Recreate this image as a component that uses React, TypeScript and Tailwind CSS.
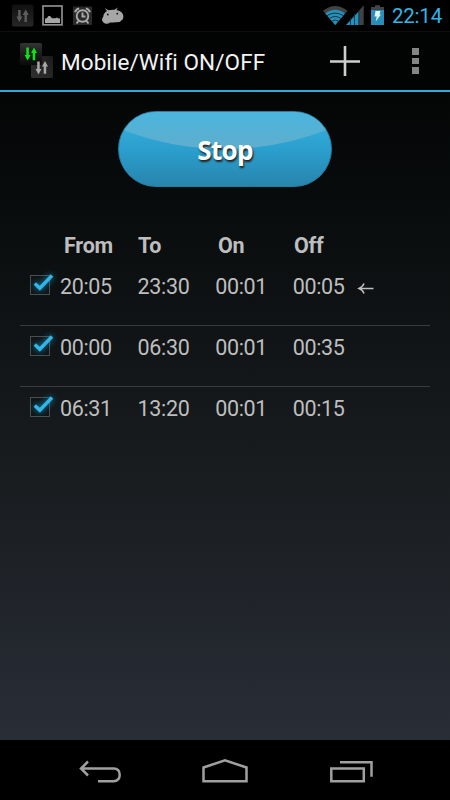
const schedules = [
  { from: "20:05", to: "23:30", on: "00:01", off: "00:05", active: true },
  { from: "00:00", to: "06:30", on: "00:01", off: "00:35", active: false },
  { from: "06:31", to: "13:20", on: "00:01", off: "00:15", active: false },
];

function StatusIcons() {
  return (
    <svg width="450" height="31" viewBox="0 0 450 31" className="block">
      <defs>
        <linearGradient id="tile" x1="0" y1="0" x2="0" y2="1">
          <stop offset="0" stopColor="#101010" />
          <stop offset="1" stopColor="#272727" />
        </linearGradient>
      </defs>
      <rect x="12" y="4.500" width="21.500" height="22" rx="2" fill="url(#tile)" />
      <g fill="#5e5e5e">
        <path d="M18.200 10h2.400v6.500h1.800l-3 5.500-3-5.500h1.800z" />
        <path d="M25.700 9.500l3 5.500h-1.800v7h-2.400v-7h-1.800z" />
      </g>
      <rect x="43" y="6" width="19" height="18.800" fill="none" stroke="#8e8e8e" strokeWidth="1.700" />
      <path d="M45 23v-4.500h1.500l2-2.500h1.500l2 2.200h3.500l1.500-.7 1.500 1h1.500v4.500z" fill="#a6a6a6" />
      <rect x="73" y="6.500" width="19" height="18.500" fill="#292929" />
      <g fill="none" stroke="#a9a9a9" strokeWidth="1.900">
        <circle cx="82.500" cy="16" r="5.800" />
        <path d="M82.500 12.500v4h3M75 12.200q1-3 4.200-3.800M90 12.200q-1-3-4.200-3.800M78.500 21l-2 2.500M86.500 21l2 2.500" />
      </g>
      <path
        d="M107 11l-2.300-3 3.800 2.300q3-.8 6-.5l3.300-2.300-1.300 2.500q3.500.5 5.300 2.500 2.700 3.500.8 7-2.500 3.300-7 2.800-3.200.3-5.600.2-1.700 1.500-4 1.200-3.500-.8-4-4 .3-2 1.300-3.200.2-3.500 3.700-5.500z"
        fill="#a6a6a6"
      />
      <circle cx="107.800" cy="14.500" r=".9" fill="#111" />
      <circle cx="117.300" cy="13.700" r=".9" fill="#111" />
      <path d="M335.200 25L323 10.800Q335.200 1 347.500 10.800z" fill="#424242" />
      <path d="M335.200 25L325.300 13.500Q335.200 6 345 13.500z" fill="#2690b9" />
      <g fill="none" stroke="#07202b" strokeWidth=".8">
        <path d="M327 15.700Q335.200 10.500 343.500 15.700" />
        <path d="M329.300 18.500Q335.200 14.500 341.200 18.500" />
        <path d="M331.500 21.300Q335.200 18.700 338.900 21.300" />
      </g>
      <path d="M346 25l13.500-14.500V25z" fill="#2690b9" />
      <path d="M359.500 10l4.200-4.800V25h-4.200z" fill="#424242" />
      <path d="M350.500 18v7M354.500 14v11M358.700 10v15" stroke="#0b3445" strokeWidth=".8" />
      <path d="M371 9.800V7h4V5.200h5V7h4v2.800z" fill="#444" />
      <path d="M371 9.800h13V25h-13z" fill="#288fb8" />
      <path d="M375.500 11h5l-1 3.500h1.500l-5.300 7 1-5h-2.200z" fill="#e3f3fb" />
    </svg>
  );
}

function AppLogo() {
  return (
    <svg width="34" height="37" viewBox="0 0 34 37" className="ml-[19px] shrink-0 -translate-y-px">
      <defs>
        <linearGradient id="logoTile" x1="0" y1="0" x2="0" y2="1">
          <stop offset="0" stopColor="#343434" />
          <stop offset=".5" stopColor="#1c1c1c" />
          <stop offset="1" stopColor="#0b0b0b" />
        </linearGradient>
        <linearGradient id="logoTileDim" x1="1" y1="0" x2="0" y2="1">
          <stop offset="0" stopColor="#1c1c1c" />
          <stop offset="1" stopColor="#303030" />
        </linearGradient>
      </defs>
      <rect x="12" y="14" width="22" height="22" rx="1.500" fill="url(#logoTileDim)" />
      <rect x="1" y="1" width="22" height="22" rx="2" fill="url(#logoTile)" />
      <g fill="#08e713">
        <path d="M7.300 5.500h2.500V13h1.800l-3 5.500-3-5.500h1.700z" />
        <path d="M15 5.500l3 5.500h-1.800v7.300h-2.500V11H12z" />
      </g>
      <g fill="#a8a8a8">
        <path d="M18.200 19.500h2.500V27h1.800l-3 5.500-3-5.500h1.700z" />
        <path d="M26 19l3 5.500h-1.800v7.300h-2.500v-7.300H23z" />
      </g>
    </svg>
  );
}

function StatusBar() {
  return (
    <div className="relative h-[31px] bg-black">
      <StatusIcons />
      <span className="absolute right-[8px] top-[2px] text-[20.500px] leading-7 tracking-[-0.200px] text-[#33b5e5]">22:14</span>
    </div>
  );
}

function ActionBar() {
  return (
    <header className="flex h-[61px] items-center border-b-2 border-t border-b-[#2fabd9] border-t-[#101010] bg-[#020404]">
      <AppLogo />
      <h1 className="ml-2 w-[267px] translate-y-px whitespace-nowrap text-[22.500px] leading-7 tracking-[0.080px] text-[#f3f3f3]">Mobile/Wifi ON/OFF</h1>
      <svg width="32" height="32" viewBox="0 0 32 32" className="ml-[1px] shrink-0">
        <path d="M16 1v30M1 16.500h30" stroke="#cecece" strokeWidth="2.600" />
      </svg>
      <div className="ml-[51px] flex flex-col gap-[3px]">
        <span className="h-[6.500px] w-[6.500px] bg-[#858585]" />
        <span className="h-[6.500px] w-[6.500px] bg-[#858585]" />
        <span className="h-[6.500px] w-[6.500px] bg-[#858585]" />
      </div>
    </header>
  );
}

function StopButton() {
  return (
    <button className="relative mx-auto block h-[76px] w-[214px] overflow-hidden rounded-full border border-[#287da1] bg-linear-to-b from-[#36b2df] via-[#2b9fce] to-[#2785ad]">
      <svg width="214" height="76" viewBox="0 0 214 76" className="absolute -left-px -top-px">
        <defs>
          <linearGradient id="gloss" x1="0" y1="0" x2="0" y2="1">
            <stop offset="0" stopColor="#4ab5df" />
            <stop offset="1" stopColor="#60adcc" />
          </linearGradient>
        </defs>
        <path d="M0 17Q107 59 214 17V1H0z" fill="url(#gloss)" />
      </svg>
      <span className="relative top-px font-['Open_Sans'] text-[26px] font-bold leading-8 tracking-[-0.700px] text-white [text-shadow:1px_2px_2px_#222]">Stop</span>
    </button>
  );
}

function Checkbox() {
  return (
    <svg width="40" height="32" viewBox="0 0 40 32" className="shrink-0 overflow-visible">
      <rect x="10.500" y="4.500" width="19" height="19" fill="#111415" stroke="#4a4e50" />
      <path
        d="M14.800 12.500l5 4.700L32 4.500"
        fill="none"
        stroke="#33b5e5"
        strokeWidth="3.500"
        className="drop-shadow-[0_0_3px_#0794c7]"
      />
    </svg>
  );
}

function ScheduleList() {
  return (
    <section className="mx-5 mt-[44px] text-[#bebebe]">
      <div className="mb-1 ml-[44px] flex h-[30px] items-center text-[21.500px] font-bold leading-7 tracking-[-0.200px]">
        <span className="w-[74px]">From</span>
        <span className="w-[80px]">To</span>
        <span className="w-[76px]">On</span>
        <span>Off</span>
      </div>
      {schedules.map((item) => (
        <div key={item.from} className="flex h-[61px] border-b border-[#393b3d] pt-[6px] text-[21.500px] leading-8 tracking-[-0.350px] last:border-0">
          <Checkbox />
          <span className="w-[77.600px]">{item.from}</span>
          <span className="w-[77.600px]">{item.to}</span>
          <span className="w-[77.600px]">{item.on}</span>
          <span className="w-[64px]">{item.off}</span>
          {item.active && (
            <svg width="18" height="32" viewBox="0 0 18 32">
              <path d="M2 17.500h14.500M7 12.500q-1 3-5 5 4 1.500 5 5" fill="none" stroke="#bebebe" strokeWidth="1.500" />
            </svg>
          )}
        </div>
      ))}
    </section>
  );
}

function NavigationBar() {
  return (
    <nav className="h-[60px] bg-black">
      <svg width="450" height="60" viewBox="0 0 450 60" fill="none" stroke="#a0a0a0" strokeWidth="2.500">
        <path d="M81 28.500h32.500q6.200 0 6.200 6.300t-6.200 6.500H98M88 21.500l-7 7 7 7" />
        <path d="M203.500 41.300V27.500L225 20.300l21.500 7.200v13.800z" />
        <path d="M331.300 28.500h32.500v12.800h-32.500zM340 22.300h31.500v14.500" />
      </svg>
    </nav>
  );
}

export default function App() {
  return (
    <div className="flex h-[800px] w-[450px] flex-col overflow-hidden bg-black font-[Roboto,sans-serif]">
      <StatusBar />
      <ActionBar />
      <main className="flex-1 bg-linear-to-b from-[#040606] via-[#15191b] to-[#292d36] pt-[19px]">
        <StopButton />
        <ScheduleList />
      </main>
      <NavigationBar />
    </div>
  );
}
